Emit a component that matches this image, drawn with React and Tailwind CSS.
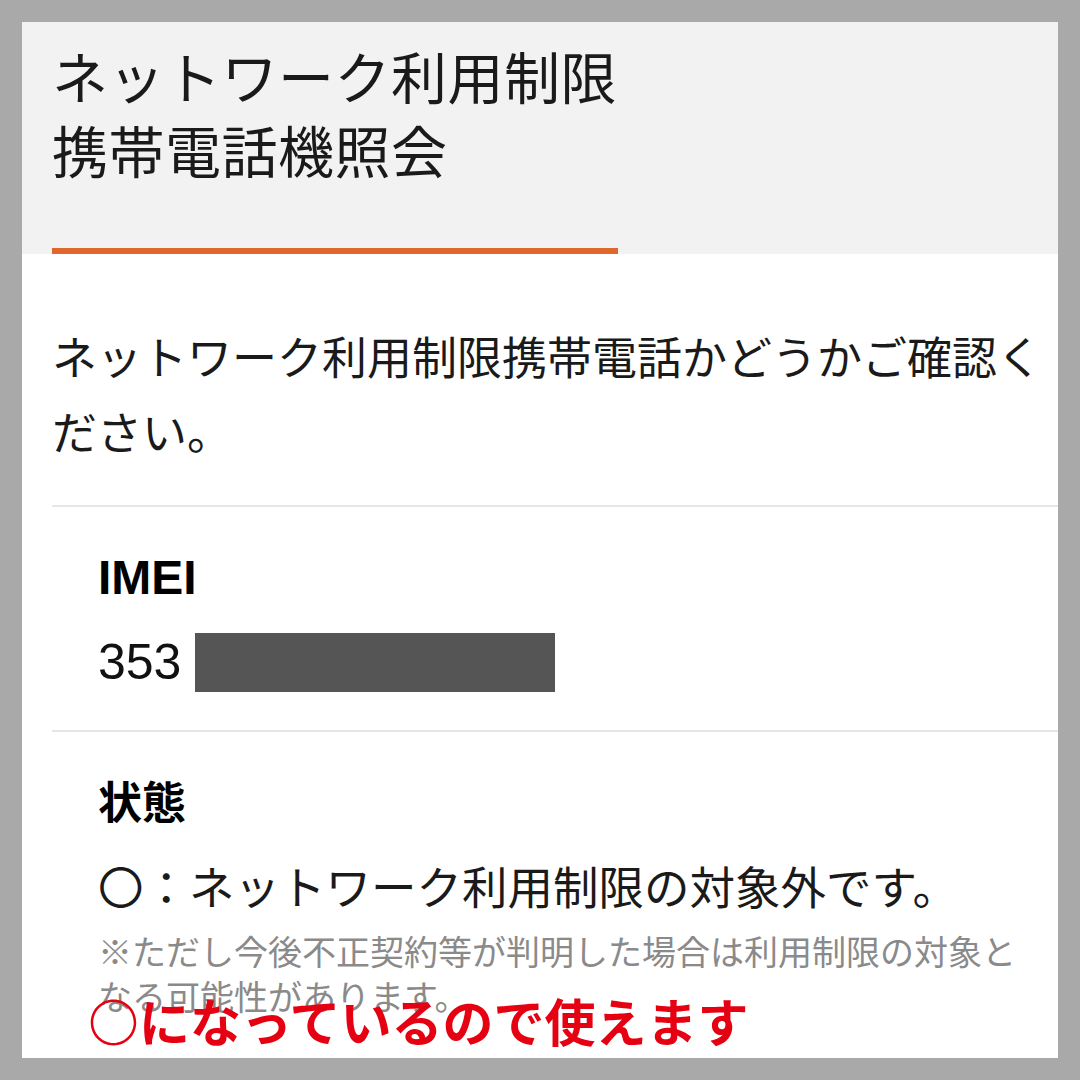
import React from 'react';

const jp = "font-['Noto_Sans_CJK_JP','Noto_Sans',sans-serif]";
const latin = "font-['Liberation_Sans','Noto_Sans_CJK_JP',sans-serif]";

export default function App() {
  return (
    <div className="w-[1080px] h-[1080px] bg-[#a9a9a9] p-[22px]">
      <div className={`relative w-full h-full bg-white overflow-hidden text-[#1a1a1a] ${jp}`}>
        {/* Header */}
        <div className="bg-[#f2f2f2] px-[30px] pt-[16px]">
          <h1 className="text-[56px] leading-[74px] font-normal tracking-[0.5px]">
            ネットワーク利用制限
            <br />
            携帯電話機照会
          </h1>
          <div className="mt-[62px] w-[566px] h-[6px] bg-[#e0672c]" />
        </div>

        {/* Intro */}
        <div className="pl-[30px]">
          <p className="pt-[64px] text-[45px] leading-[75px]">
            ネットワーク利用制限携帯電話かどうかご確認ください。
          </p>

          <div className="mt-[37px] border-t-2 border-[#e6e6e6]" />

          {/* IMEI */}
          <div className="pl-[46px] pt-[43px] pb-[38px]">
            <div className={`${latin} font-bold text-[48px] leading-[56px] text-black`}>IMEI</div>
            <div className="mt-[26px] flex items-center">
              <span className={`${latin} text-[50px] leading-[60px] text-[#111]`}>353</span>
              <div className="ml-[14px] w-[360px] h-[59px] bg-[#555555]" />
            </div>
          </div>

          <div className="border-t-2 border-[#e6e6e6]" />

          {/* Status */}
          <div className="pl-[46px] pt-[40px]">
            <div className="font-bold text-[44px] leading-[56px] text-black">状態</div>
            <p className="mt-[29px] text-[45.5px] leading-[56px]">〇：ネットワーク利用制限の対象外です。</p>
            <p className="mt-[15px] w-[930px] text-[34px] leading-[45px] text-[#8a8a8a]">
              ※ただし今後不正契約等が判明した場合は利用制限の対象となる可能性があります。
            </p>
          </div>
        </div>

        {/* Red annotation */}
        <div className="absolute left-[66px] top-[968px] text-[51px] leading-[60px] font-bold text-[#e50012] whitespace-nowrap">
          <span className="font-light">〇</span>になっているので使えます
        </div>
      </div>
    </div>
  );
}
